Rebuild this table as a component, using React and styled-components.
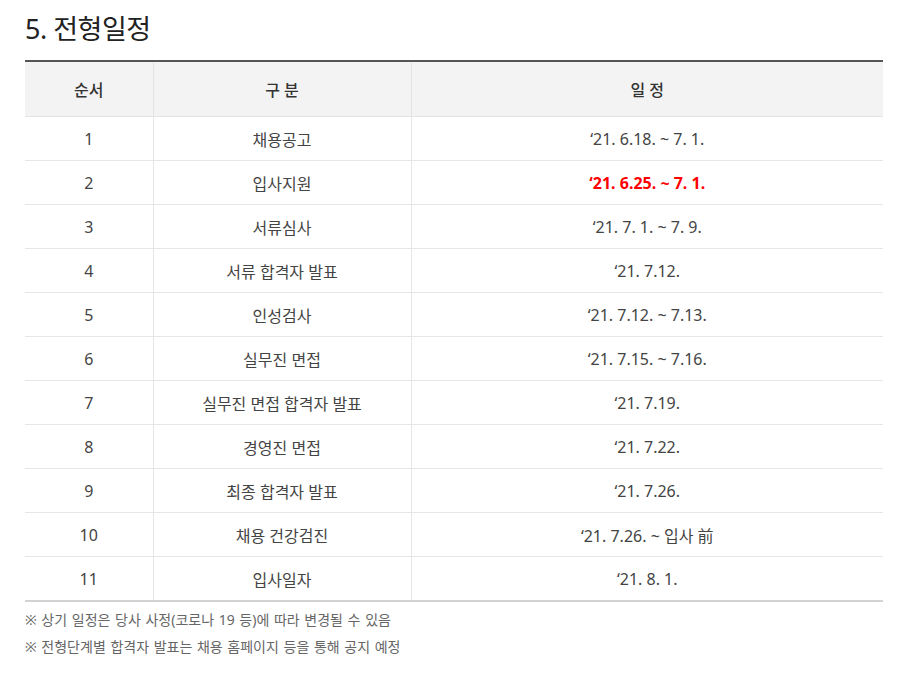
import React from 'react';
import styled, { createGlobalStyle } from 'styled-components';

const GlobalStyle = createGlobalStyle`
  body {
    margin: 0;
    background: #fff;
    font-family: "Noto Sans", "Noto Sans CJK KR", sans-serif;
  }
`;

const rows = [
  { no: 1, title: '채용공고', date: '‘21. 6.18. ~ 7. 1.' },
  { no: 2, title: '입사지원', date: '‘21. 6.25. ~ 7. 1.', highlight: true },
  { no: 3, title: '서류심사', date: '‘21. 7. 1. ~ 7. 9.' },
  { no: 4, title: '서류 합격자 발표', date: '‘21. 7.12.' },
  { no: 5, title: '인성검사', date: '‘21. 7.12. ~ 7.13.' },
  { no: 6, title: '실무진 면접', date: '‘21. 7.15. ~ 7.16.' },
  { no: 7, title: '실무진 면접 합격자 발표', date: '‘21. 7.19.' },
  { no: 8, title: '경영진 면접', date: '‘21. 7.22.' },
  { no: 9, title: '최종 합격자 발표', date: '‘21. 7.26.' },
  { no: 10, title: '채용 건강검진', date: '‘21. 7.26. ~ 입사 前' },
  { no: 11, title: '입사일자', date: '‘21. 8. 1.' },
];

const notes = [
  '※ 상기 일정은 당사 사정(코로나 19 등)에 따라 변경될 수 있음',
  '※ 전형단계별 합격자 발표는 채용 홈페이지 등을 통해 공지 예정',
];

const App = () => {
  return (
    <>
      <GlobalStyle />
      <Section>
        <Title>5. 전형일정</Title>

        <Table>
          <colgroup>
            <col style={{ width: 128 }} />
            <col style={{ width: 258 }} />
            <col />
          </colgroup>
          <thead>
            <tr>
              <Th>순서</Th>
              <Th>구 분</Th>
              <Th>일 정</Th>
            </tr>
          </thead>
          <tbody>
            {rows.map(row => (
              <tr key={row.no}>
                <Td>{row.no}</Td>
                <Td>{row.title}</Td>
                <Td $highlight={row.highlight}>{row.date}</Td>
              </tr>
            ))}
          </tbody>
        </Table>

        <NoteList>
          {notes.map(note => <li key={note}>{note}</li>)}
        </NoteList>
      </Section>
    </>
  );
};

export default App;

const Section = styled.div`
  padding: 11px 14px 0 25px;
  width: 858px;
`;

const Title = styled.h2`
  margin: 0 0 13px;
  font-size: 27px;
  font-weight: 400;
  line-height: 36px;
  color: #222;
  letter-spacing: -0.5px;
`;

const Table = styled.table`
  width: 858px;
  border-collapse: collapse;
  table-layout: fixed;
  border-top: 2px solid #555;
  border-bottom: 2px solid #d3d3d6;
`;

const Th = styled.th`
  height: 54px;
  padding: 0;
  background: #f3f3f3;
  border-bottom: 1px solid #e3e3e3;
  border-left: 1px solid #e3e3e3;
  font-size: 16px;
  font-weight: 500;
  color: #333;
  text-align: center;

  &:first-child { border-left: 0; }
`;

const Td = styled.td`
  height: 43px;
  padding: 0;
  border-top: 1px solid #e6e6e6;
  border-left: 1px solid #e6e6e6;
  font-size: 16px;
  font-weight: ${p => (p.$highlight ? 700 : 400)};
  color: ${p => (p.$highlight ? '#ff0000' : '#444')};
  text-align: center;

  &:first-child { border-left: 0; }
`;

const NoteList = styled.ul`
  margin: 4px 0 0;
  padding: 0;
  list-style: none;

  li {
    font-size: 14px;
    line-height: 27px;
    color: #666;
    word-spacing: 1px;
  }
`;
